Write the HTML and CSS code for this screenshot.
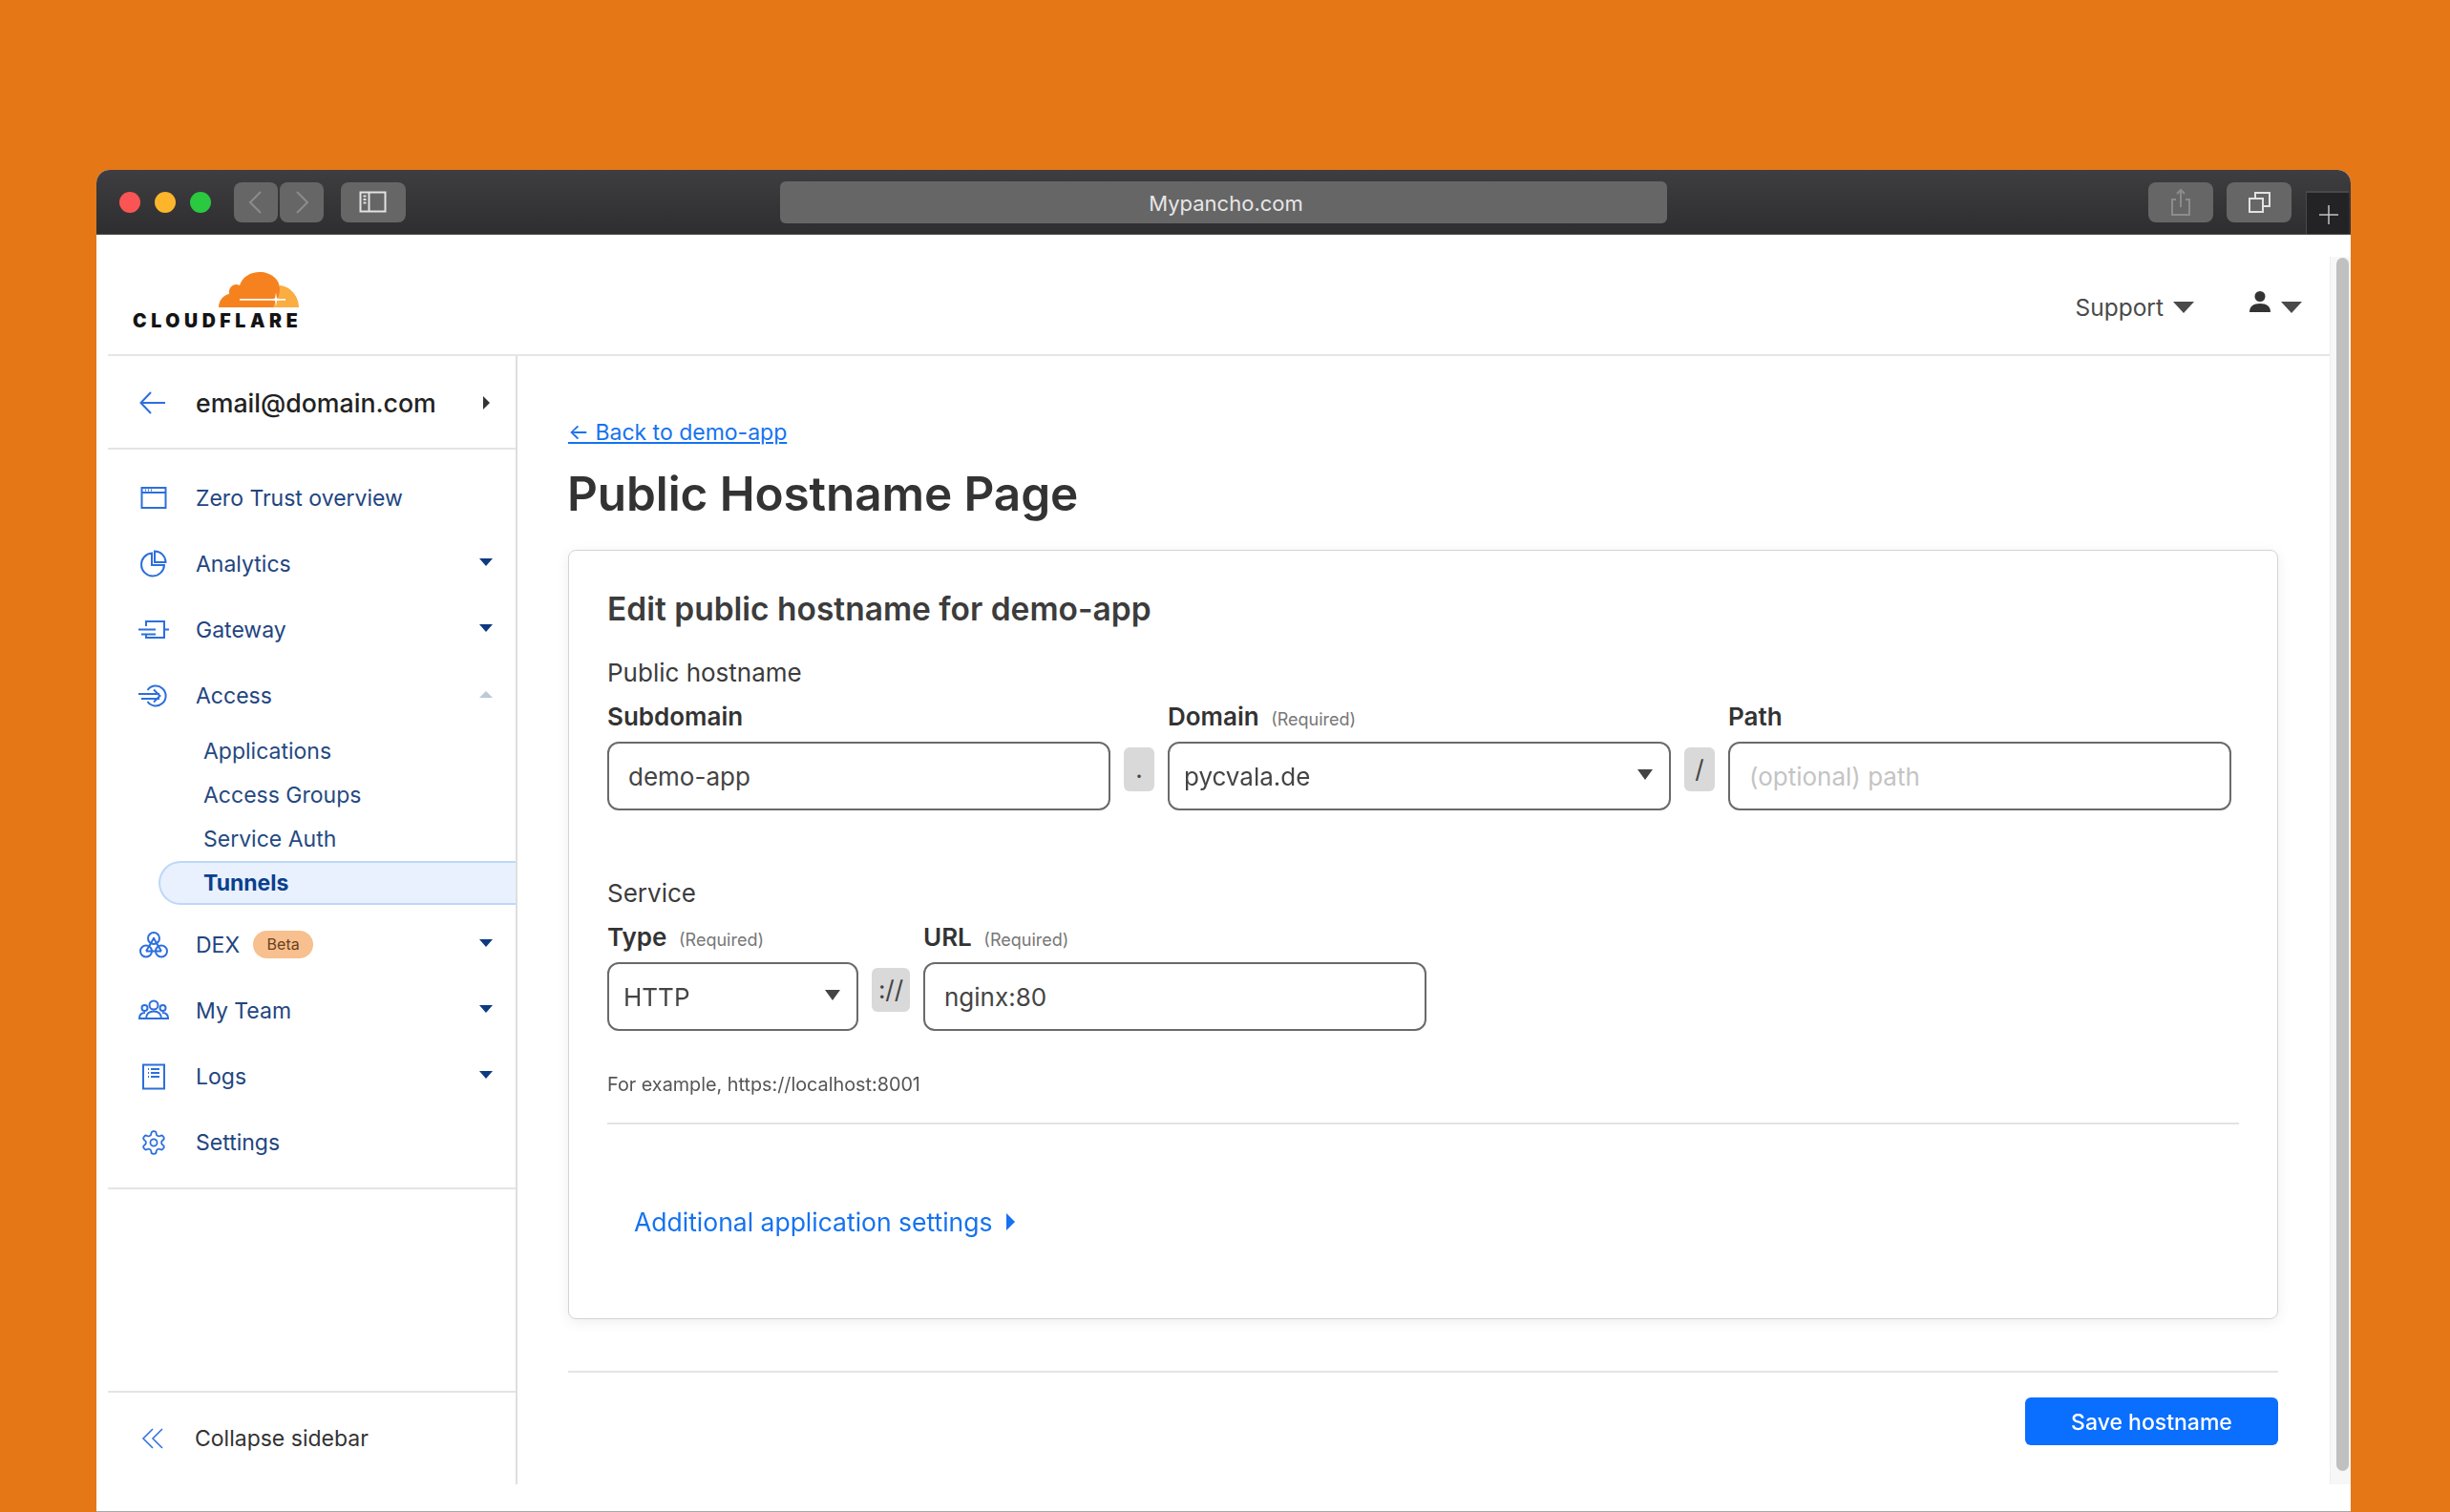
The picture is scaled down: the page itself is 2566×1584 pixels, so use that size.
FILE: index.html
```html
<!DOCTYPE html>
<html lang="en">
<head>
<meta charset="utf-8">
<title>Public Hostname Page</title>
<link rel="stylesheet" href="styles.css">
</head>
<body>
<div class="window">
  <div class="titlebar">
    <div class="lights"><span class="light red"></span><span class="light yellow"></span><span class="light green"></span></div>
    <div class="nav-buttons">
      <span class="tb-btn narrow"><svg width="20" height="26" viewBox="0 0 20 26"><path d="M15 2 4 13l11 11" class="tb-dim"/></svg></span>
      <span class="tb-btn narrow"><svg width="20" height="26" viewBox="0 0 20 26"><path d="M5 2l11 11L5 24" class="tb-dim"/></svg></span>
    </div>
    <span class="tb-btn wide sidebar-btn"><svg width="30" height="24" viewBox="0 0 30 24"><rect x="1.500" y="1.500" width="26" height="20" class="tb-line"/><path d="M10.500 1.500v20M4.500 5.500h3M4.500 9h3M4.500 12.500h3" class="tb-line"/></svg></span>
    <div class="address">Mypancho.com</div>
    <span class="tb-btn wide"><svg width="24" height="30" viewBox="0 0 24 30"><path d="M7 12H3v16h18V12h-4M12 20V2M8 6l4-4 4 4" class="tb-dim"/></svg></span>
    <span class="tb-btn wide"><svg width="23" height="22" viewBox="0 0 23 22"><rect x="1" y="7" width="14" height="14" class="tb-line"/><path d="M7 7V1h15v14h-7" class="tb-line"/></svg></span>
    <div class="new-tab"><svg width="22" height="22" viewBox="0 0 22 22"><path d="M11 1v20M1 11h20" class="tb-thin"/></svg></div>
  </div>

  <div class="page">
    <div class="app">
      <header class="topbar">
        <div class="logo">
          <svg class="logo-cloud" width="84" height="37" viewBox="0 0 84 37">
            <path d="M64 14C75 15 84 25 84 37H56l4-8z" fill="#fbad41"/>
            <path d="M0 37C0 30 5 24 11 23 10 16 16 11 22 14 25 5 33 0 43 0 55 0 64 8 64 17c0 5-1 9-3 12l-4 8z" fill="#f6821f"/>
            <path d="M22 28.800H70" stroke="#fff" stroke-width="1.800" fill="none"/>
            <path d="M54 28.800l5-1.200 1-6 1 6 7 1.200-7 1.200-1 6-1-6z" fill="#fff"/>
          </svg>
          <span class="logo-word">CLOUDFLARE</span>
        </div>
        <div class="top-actions">
          <span class="support">Support</span>
          <span class="tri"></span>
          <svg class="person" width="22" height="22" viewBox="0 0 22 22"><circle cx="11" cy="5.500" r="5.500" fill="#333"/><path d="M0 22c0-6 4-9 11-9s11 3 11 9z" fill="#333"/></svg>
          <span class="tri"></span>
        </div>
      </header>

      <div class="body">
        <aside class="sidebar">
          <div class="account">
            <svg class="icon" width="32" height="32" viewBox="0 0 32 32"><path d="M28 16H3M13 5 2.500 16 13 27" class="ic"/></svg>
            <span class="account-name">email@domain.com</span>
            <span class="caret-right"></span>
          </div>
          <nav class="nav">
            <a class="item">
              <svg class="icon" width="32" height="32" viewBox="0 0 32 32"><rect x="3.500" y="5" width="25" height="21" class="ic"/><path d="M3.500 10h25M7 7.500h1M10 7.500h1M13 7.500h1" class="ic"/></svg>
              <span>Zero Trust overview</span>
            </a>
            <a class="item">
              <svg class="icon" width="32" height="32" viewBox="0 0 32 32"><path d="M14 4.500a12 12 0 1 0 13 12.500H14z" class="ic"/><path d="M17 2.500A11.500 11.500 0 0 1 28.500 14H17z" class="ic"/></svg>
              <span>Analytics</span><span class="caret"></span>
            </a>
            <a class="item">
              <svg class="icon" width="32" height="32" viewBox="0 0 32 32"><path d="M8 12V7h19v17H8v-4M0 15.500h18M3 20.500h15M27 15.500h5" class="ic"/></svg>
              <span>Gateway</span><span class="caret"></span>
            </a>
            <a class="item">
              <svg class="icon" width="32" height="32" viewBox="0 0 32 32"><path d="M9.500 10a10.500 10.500 0 1 1 0 12M0 14h22M3 19h19M16 9.500l6.500 6.500-6.500 6.500" class="ic"/></svg>
              <span>Access</span><span class="caret up"></span>
            </a>
            <div class="sub">
              <a class="sub-item">Applications</a>
              <a class="sub-item">Access Groups</a>
              <a class="sub-item">Service Auth</a>
              <a class="sub-item active">Tunnels</a>
            </div>
            <a class="item">
              <svg class="icon" width="32" height="32" viewBox="0 0 32 32"><circle cx="16" cy="9" r="6" class="ic"/><circle cx="8" cy="22.500" r="6" class="ic"/><circle cx="24" cy="22.500" r="6" class="ic"/><path d="M16 8v1M8 22.500h16M16 9l-8 13.500M16 9l8 13.500" class="ic"/></svg>
              <span>DEX</span><span class="badge">Beta</span><span class="caret"></span>
            </a>
            <a class="item">
              <svg class="icon" width="32" height="32" viewBox="0 0 32 32"><circle cx="16" cy="10" r="4.500" class="ic"/><circle cx="6.500" cy="13" r="3" class="ic"/><circle cx="25.500" cy="13" r="3" class="ic"/><path d="M8 24c0-5 3.500-7.500 8-7.500s8 2.500 8 7.500M1 24c0-4 2-6 6-6M31 24c0-4-2-6-6-6M0 24h32" class="ic"/></svg>
              <span>My Team</span><span class="caret"></span>
            </a>
            <a class="item">
              <svg class="icon" width="32" height="32" viewBox="0 0 32 32"><rect x="5" y="3.500" width="22" height="25" class="ic"/><path d="M10 8h1M13 8h9M10 12h1M13 12h9M10 16h1M13 16h9" class="ic"/></svg>
              <span>Logs</span><span class="caret"></span>
            </a>
            <a class="item">
              <svg class="icon" width="32" height="32" viewBox="-1.500 -1.500 27 27"><path d="M12.220 2h-.44a2 2 0 0 0-2 2v.18a2 2 0 0 1-1 1.730l-.43.25a2 2 0 0 1-2 0l-.15-.08a2 2 0 0 0-2.730.73l-.22.38a2 2 0 0 0 .73 2.730l.15.1a2 2 0 0 1 1 1.720v.51a2 2 0 0 1-1 1.740l-.15.09a2 2 0 0 0-.73 2.730l.22.38a2 2 0 0 0 2.730.73l.15-.08a2 2 0 0 1 2 0l.43.25a2 2 0 0 1 1 1.730V20a2 2 0 0 0 2 2h.44a2 2 0 0 0 2-2v-.18a2 2 0 0 1 1-1.730l.43-.25a2 2 0 0 1 2 0l.15.08a2 2 0 0 0 2.730-.73l.22-.39a2 2 0 0 0-.73-2.730l-.15-.08a2 2 0 0 1-1-1.740v-.5a2 2 0 0 1 1-1.740l.15-.09a2 2 0 0 0 .73-2.730l-.22-.38a2 2 0 0 0-2.730-.73l-.15.08a2 2 0 0 1-2 0l-.43-.25a2 2 0 0 1-1-1.730V4a2 2 0 0 0-2-2z" class="ic thin"/><circle cx="12" cy="12" r="3" class="ic thin"/></svg>
              <span>Settings</span>
            </a>
          </nav>
          <div class="collapse">
            <svg class="icon" width="32" height="32" viewBox="0 0 32 32"><path d="M15 6 5 16l10 10M25 6 15 16l10 10" class="ic thin"/></svg>
            <span>Collapse sidebar</span>
          </div>
        </aside>

        <main class="main">
          <a class="back">← Back to demo-app</a>
          <h1 class="title">Public Hostname Page</h1>
          <section class="card">
            <h2 class="card-title">Edit public hostname for demo-app</h2>
            <div class="group-label first">Public hostname</div>
            <div class="row">
              <div class="field w-528">
                <div class="label">Subdomain</div>
                <input class="input pad-20" value="demo-app">
              </div>
              <span class="chip w-33">.</span>
              <div class="field w-528">
                <div class="label">Domain <small>(Required)</small></div>
                <div class="select-wrap"><select class="input pad-16"><option>pycvala.de</option></select><span class="select-caret"></span></div>
              </div>
              <span class="chip w-33">/</span>
              <div class="field w-528">
                <div class="label">Path</div>
                <input class="input pad-20" placeholder="(optional) path">
              </div>
            </div>
            <div class="group-label">Service</div>
            <div class="row">
              <div class="field w-264">
                <div class="label">Type <small>(Required)</small></div>
                <div class="select-wrap"><select class="input pad-16"><option>HTTP</option></select><span class="select-caret"></span></div>
              </div>
              <span class="chip w-41">://</span>
              <div class="field w-528">
                <div class="label">URL <small>(Required)</small></div>
                <input class="input pad-20" value="nginx:80">
              </div>
            </div>
            <p class="help">For example, https://localhost:8001</p>
            <hr class="divider">
            <a class="more">Additional application settings<span class="more-caret"></span></a>
          </section>
          <div class="actions">
            <button class="save">Save hostname</button>
          </div>
        </main>
      </div>
    </div>
    <div class="scrollbar"><div class="thumb"></div></div>
  </div>
</div>
</body>
</html>
```

FILE: styles.css
```css
* { box-sizing: border-box; }
html, body { margin: 0; height: 100%; }
body {
  background: #e57717;
  padding: 178px 0 0 101px;
  overflow: hidden;
  font-family: Inter, "Liberation Sans", sans-serif;
  color: #333;
}
a { color: inherit; text-decoration: none; }

.window {
  width: 2361px;
  height: 1406px;
  background: #fff;
  border-radius: 14px 14px 0 0;
  border-bottom: 1px solid #a8a8a8;
  display: flex;
  flex-direction: column;
  overflow: hidden;
  filter: blur(0.45px);
}

/* Browser chrome */
.titlebar {
  height: 68px;
  flex: none;
  display: flex;
  align-items: center;
  padding-left: 24px;
  background: linear-gradient(#3e3e41, #2e2e30);
  border-bottom: 1px solid #555;
}
.lights { display: flex; gap: 15px; margin-right: 24px; }
.light { width: 22px; height: 22px; border-radius: 50%; }
.red { background: #fb5454; }
.yellow { background: #fdb52c; }
.green { background: #2ac940; }
.nav-buttons { display: flex; gap: 2px; margin-right: 18px; }
.tb-btn {
  height: 42px;
  background: #666;
  border-radius: 8px;
  display: flex;
  align-items: center;
  justify-content: center;
}
.narrow { width: 46px; }
.wide { width: 68px; margin-right: 14px; }
.sidebar-btn { margin-right: 0; }
.tb-dim { fill: none; stroke: #8c8c8c; stroke-width: 2; }
.tb-line { fill: none; stroke: #e2e2e2; stroke-width: 2; }
.tb-thin { fill: none; stroke: #c4c4c4; stroke-width: 1.500; }
.address {
  width: 929px;
  height: 44px;
  margin: 0 504px 0 392px;
  padding: 2px 0 0 5px;
  background: #666;
  border-radius: 6px;
  color: #e6e6e6;
  font-size: 22px;
  line-height: 42px;
  text-align: center;
}
.new-tab {
  width: 45px;
  height: 45px;
  align-self: flex-end;
  margin-left: 1px;
  padding: 2px 0 0 2px;
  background: #232325;
  border: 1px solid #49494b;
  border-width: 2px 0 0 1px;
  display: flex;
  align-items: center;
  justify-content: center;
}

/* Page frame */
.page { flex: 1; display: flex; min-height: 0; }
.app {
  width: 2339px;
  flex: none;
  height: 1309px;
  padding-left: 12px;
  display: flex;
  flex-direction: column;
}
.scrollbar {
  width: 22px;
  height: 1286px;
  margin-top: 23px;
  padding: 1px 3px 0 6px;
  background: #f7f7f7;
  border-left: 1px solid #eee;
}
.thumb { width: 13px; height: 1271px; background: #c0c0c0; border-radius: 7px; }

.topbar {
  height: 127px;
  flex: none;
  display: flex;
  align-items: center;
  justify-content: space-between;
  padding: 0 29px 4px 26px;
  border-bottom: 2px solid #e6e6e6;
}
.logo { width: 174px; display: flex; flex-direction: column; align-items: flex-end; gap: 7px; margin-top: 15px; }
.logo-cloud { display: block; }
.logo-word {
  align-self: flex-start;
  font-weight: 900;
  font-size: 19.500px;
  line-height: 15px;
  letter-spacing: 4.600px;
  color: #141414;
  white-space: nowrap;
}
.top-actions { display: flex; align-items: center; margin-top: 30px; }
.support { font-size: 24.500px; color: #4a4a4a; margin-right: 10px; }
.tri {
  width: 0; height: 0;
  border-left: 11px solid transparent;
  border-right: 11px solid transparent;
  border-top: 12px solid #4a4a4a;
}
.person { margin: -11px 11px 0 58px; display: block; }

.body { flex: 1; display: flex; min-height: 0; }

/* Sidebar */
.sidebar {
  width: 429px;
  flex: none;
  border-right: 2px solid #dedede;
  display: flex;
  flex-direction: column;
}
.account {
  height: 98px;
  flex: none;
  display: flex;
  align-items: center;
  padding: 2px 27px 0 32px;
  gap: 28px;
  border-bottom: 2px solid #e4e4e4;
}
.icon { flex: none; display: block; }
.ic { fill: none; stroke: #2c6fdc; stroke-width: 2; }
.ic.thin { stroke-width: 1.500; }
.account-name { font-size: 26.700px; font-weight: 500; color: #222; }
.caret-right {
  margin-left: auto;
  border-top: 7px solid transparent;
  border-bottom: 7px solid transparent;
  border-left: 7px solid #333;
}
.nav {
  padding: 16px 0 13px;
  border-bottom: 2px solid #e4e4e4;
}
.item {
  height: 69px;
  display: flex;
  align-items: center;
  padding: 0 24px 0 32px;
  color: #22457f;
  font-size: 23px;
}
.item .icon { margin-right: 28px; }
.caret {
  margin-left: auto;
  border-left: 7px solid transparent;
  border-right: 7px solid transparent;
  border-top: 8px solid #0d3a80;
  margin-top: -3px;
}
.caret.up {
  border-top: 0;
  border-bottom: 7px solid #bcc9d8;
}
.sub { margin: 1px 0 7px; }
.sub-item {
  height: 46px;
  margin-left: 53px;
  padding-left: 47px;
  display: flex;
  align-items: center;
  font-size: 23px;
  color: #25497f;
  border-radius: 23px 0 0 23px;
}
.sub-item.active {
  background: #e8f1fd;
  border: 2px solid #bdd7f8;
  border-right: 0;
  padding-left: 45px;
  font-weight: 700;
  color: #0b3f8e;
}
.badge {
  margin-left: 14px;
  width: 63px;
  height: 29px;
  background: #f7c08e;
  border-radius: 15px;
  color: #6b3f1d;
  font-size: 16px;
  line-height: 29px;
  text-align: center;
}
.collapse {
  height: 98px;
  flex: none;
  margin-top: auto;
  display: flex;
  align-items: center;
  gap: 27px;
  padding-left: 32px;
  border-top: 2px solid #e4e4e4;
  font-size: 23px;
  color: #333;
}

/* Main */
.main {
  flex: 1;
  min-width: 0;
  padding: 63px 54px 0 53px;
}
.back {
  display: block;
  color: #1572f0;
  font-size: 23px;
  line-height: 34px;
  text-decoration: underline;
}
.title {
  margin: 18px 0 30px;
  margin-left: -1px;
  font-size: 49.500px;
  line-height: 58px;
  font-weight: 600;
  letter-spacing: -0.100px;
  color: #333;
}
.card {
  height: 806px;
  padding: 41px 40px 0;
  border: 1px solid #d4d4d4;
  border-radius: 8px;
  box-shadow: 0 3px 14px rgba(0,0,0,.07);
}
.card-title {
  margin: 0;
  font-size: 33.500px;
  line-height: 40px;
  font-weight: 600;
  color: #3c3c3c;
}
.group-label {
  margin-top: 70px;
  font-size: 26px;
  line-height: 34px;
  color: #3c3c3c;
}
.group-label.first { margin-top: 30px; }
.row { display: flex; align-items: flex-end; gap: 14px; margin-top: 12px; }
.field { flex: none; }
.w-528 { width: 527px; }
.w-264 { width: 263px; }
.label {
  height: 34px;
  font-size: 26px;
  line-height: 34px;
  font-weight: 600;
  color: #333;
  margin-bottom: 9px;
}
.label small {
  margin-left: 6px;
  font-size: 18px;
  line-height: 1;
  font-weight: 400;
  color: #777;
}
.input {
  display: block;
  width: 100%;
  height: 72px;
  border: 2px solid #6a6a6a;
  border-radius: 12px;
  background: #fff;
  font: 400 26px Inter, "Liberation Sans", sans-serif;
  color: #444;
  outline: none;
  appearance: none;
}
.input::placeholder { color: #c4c4c4; opacity: 1; }
.pad-20 { padding: 0 20px; }
.pad-16 { padding: 0 15px; }
.select-wrap { position: relative; }
.select-caret {
  position: absolute;
  right: 19px;
  top: 29px;
  border-left: 8px solid transparent;
  border-right: 8px solid transparent;
  border-top: 11px solid #444;
}
.chip {
  flex: none;
  height: 46px;
  margin-bottom: 20px;
  background: #d9d9d9;
  border-radius: 6px;
  text-align: center;
  font-size: 26px;
  line-height: 46px;
  color: #444;
}
.w-33 { width: 32px; }
.w-41 { width: 40px; }
.help {
  margin: 42px 0 0;
  font-size: 19.800px;
  line-height: 28px;
  color: #555;
}
.divider { margin: 26px 0 0; border: 0; border-top: 2px solid #e3e3e3; }
.more {
  display: flex;
  align-items: center;
  margin: 84px 0 0 28px;
  font-size: 26.500px;
  line-height: 36px;
  color: #1572f0;
}
.more-caret {
  margin-left: 14px;
  border-top: 9px solid transparent;
  border-bottom: 9px solid transparent;
  border-left: 9px solid #1572f0;
}
.actions {
  margin-top: 54px;
  padding-top: 26px;
  border-top: 2px solid #e4e4e4;
  display: flex;
  justify-content: flex-end;
}
.save {
  width: 265px;
  height: 50px;
  padding: 2px 0 0;
  border: 0;
  border-radius: 6px;
  background: #0a6eff;
  color: #fff;
  font: 500 23px Inter, "Liberation Sans", sans-serif;
}
```
